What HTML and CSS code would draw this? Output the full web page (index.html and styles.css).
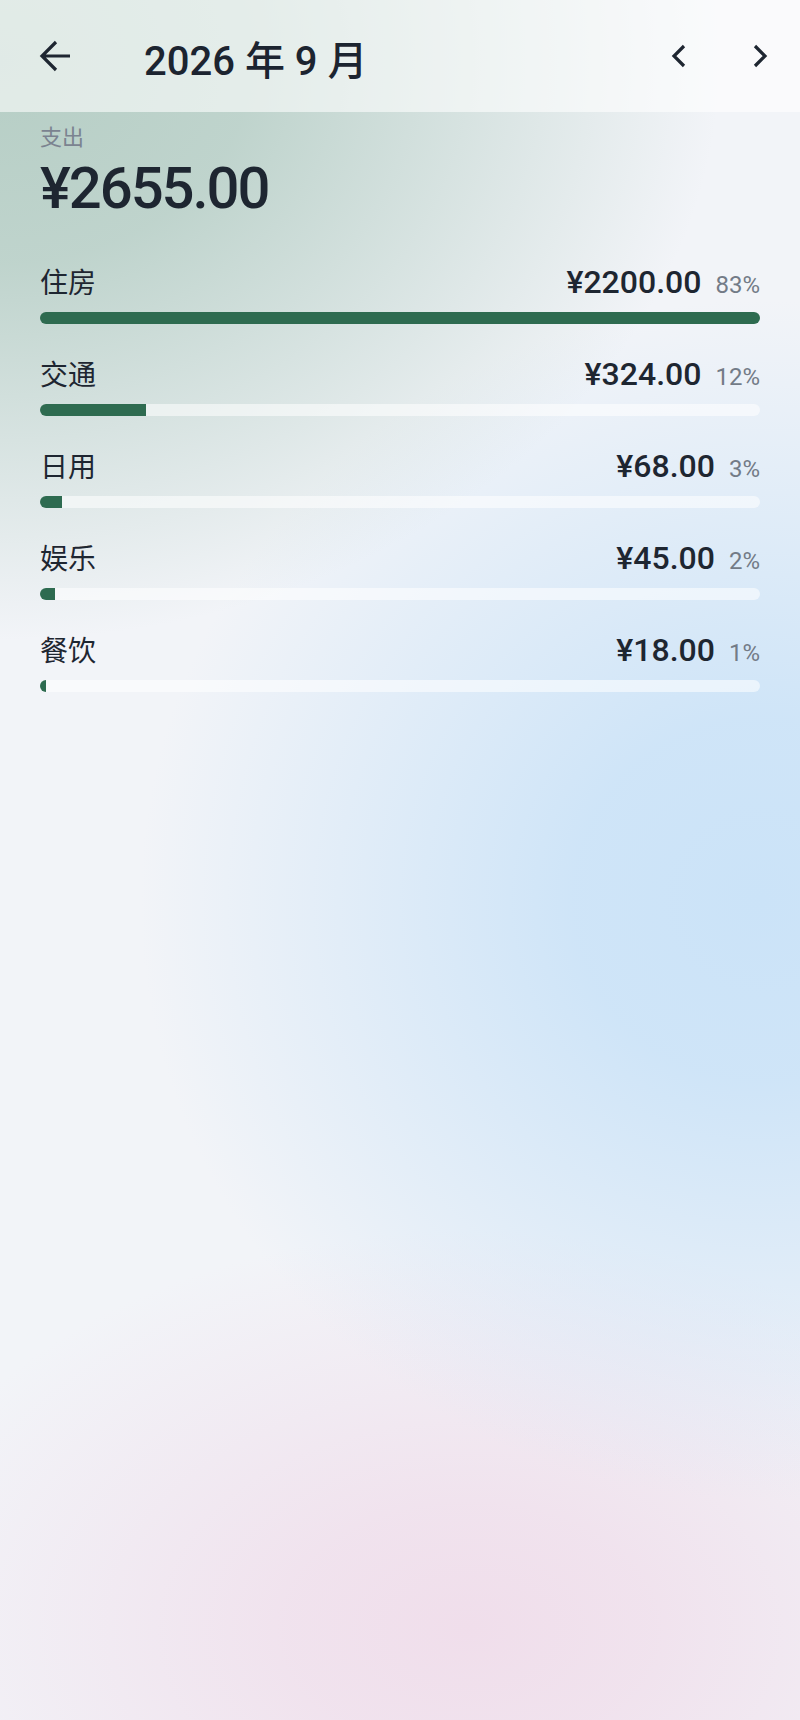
FILE: index.html
```html
<html>
<head>
    <meta charset="utf-8">
    <title>2026 年 9 月 支出</title>
    <link rel="stylesheet" href="styles.css">
</head>
<body>
    <header class="topbar">
        <button class="icon-btn back-btn" aria-label="返回">
            <svg viewBox="0 0 24 24" width="48" height="48"><path d="M19 12H5M12 19l-7-7 7-7"/></svg>
        </button>
        <h1 class="month-title">2026 年 9 月</h1>
        <div class="month-nav">
            <button class="icon-btn" aria-label="上个月">
                <svg viewBox="0 0 24 24" width="48" height="48"><path d="M14.5 17l-5-5 5-5"/></svg>
            </button>
            <button class="icon-btn" aria-label="下个月">
                <svg viewBox="0 0 24 24" width="48" height="48"><path d="M9.5 7l5 5-5 5"/></svg>
            </button>
        </div>
    </header>

    <main class="summary">
        <div class="summary-label">支出</div>
        <div class="summary-total">¥2655.00</div>

        <ul class="category-list">
            <li class="category">
                <div class="category-head">
                    <span class="category-name">住房</span>
                    <span class="category-amount">¥2200.00</span>
                    <span class="category-pct">83%</span>
                </div>
                <div class="track"><div class="fill" style="width: 100%"></div></div>
            </li>
            <li class="category">
                <div class="category-head">
                    <span class="category-name">交通</span>
                    <span class="category-amount">¥324.00</span>
                    <span class="category-pct">12%</span>
                </div>
                <div class="track"><div class="fill" style="width: 14.73%"></div></div>
            </li>
            <li class="category">
                <div class="category-head">
                    <span class="category-name">日用</span>
                    <span class="category-amount">¥68.00</span>
                    <span class="category-pct">3%</span>
                </div>
                <div class="track"><div class="fill" style="width: 3.09%"></div></div>
            </li>
            <li class="category">
                <div class="category-head">
                    <span class="category-name">娱乐</span>
                    <span class="category-amount">¥45.00</span>
                    <span class="category-pct">2%</span>
                </div>
                <div class="track"><div class="fill" style="width: 2.05%"></div></div>
            </li>
            <li class="category">
                <div class="category-head">
                    <span class="category-name">餐饮</span>
                    <span class="category-amount">¥18.00</span>
                    <span class="category-pct">1%</span>
                </div>
                <div class="track"><div class="fill" style="width: 0.82%"></div></div>
            </li>
        </ul>
    </main>
</body>
</html>
```

FILE: styles.css
```css
html {
    background: #f2f4f8;
}

body {
    margin: 0;
    min-height: 100vh;
    font-family: Roboto, "Noto Sans CJK SC", sans-serif;
    color: #1e2631;
    background:
        radial-gradient(ellipse 720px 580px at 0px 60px, rgba(182, 206, 197, 1) 0%, rgba(182, 206, 197, 0.85) 35%, rgba(182, 206, 197, 0) 100%),
        radial-gradient(ellipse 620px 600px at 760px 900px, rgba(203, 227, 248, 1) 0%, rgba(203, 227, 248, 0.9) 30%, rgba(203, 227, 248, 0) 100%),
        radial-gradient(ellipse 600px 400px at 470px 1630px, rgba(240, 222, 235, 1) 0%, rgba(240, 222, 235, 0.8) 30%, rgba(240, 222, 235, 0) 100%),
        #f2f4f8;
}

/* top bar */
.topbar {
    height: 112px;
    display: flex;
    align-items: center;
    padding: 0 16px 0 32px;
    background: rgba(255, 255, 255, 0.58);
}

.icon-btn {
    width: 48px;
    height: 48px;
    padding: 0;
    border: none;
    background: none;
    cursor: pointer;
    display: flex;
}

.icon-btn svg {
    fill: none;
    stroke: #1e2631;
    stroke-width: 1.6;
    stroke-linejoin: miter;
}

.month-title {
    margin: 3px 0 0 64px;
    font-size: 40px;
    font-weight: 500;
    color: #1c2430;
}

.month-nav {
    margin-left: auto;
    display: flex;
    gap: 33px;
}

/* summary */
.summary {
    padding: 10px 40px 0 40px;
}

.summary-label {
    font-size: 22px;
    line-height: 32px;
    color: #7b8390;
}

.summary-total {
    font-size: 58px;
    line-height: 68px;
    font-weight: 500;
    letter-spacing: -0.035em;
}

.category-list {
    list-style: none;
    margin: 40px 0 0 0;
    padding: 0;
    display: flex;
    flex-direction: column;
    gap: 30px;
}

.category-head {
    display: flex;
    align-items: baseline;
    height: 40px;
    line-height: 40px;
}

.category-name {
    font-size: 28px;
}

.category-amount {
    margin-left: auto;
    font-size: 32px;
    font-weight: 500;
}

.category-pct {
    margin-left: 14px;
    font-size: 24px;
    color: #737b87;
}

.track {
    margin-top: 10px;
    height: 12px;
    border-radius: 6px;
    overflow: hidden;
    background: rgba(255, 255, 255, 0.55);
}

.fill {
    height: 100%;
    background: #2e6b50;
}
```
